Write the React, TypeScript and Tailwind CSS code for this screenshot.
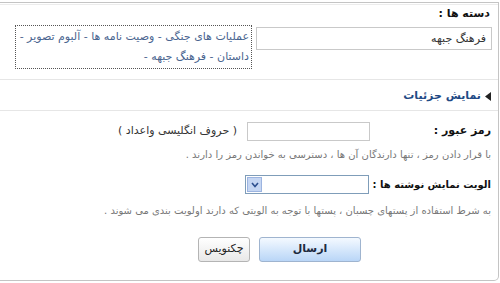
import React from "react";

const FONT = { fontFamily: '"DejaVu Sans", Tahoma, sans-serif' };

export default function App() {
  return (
    <div className="w-[500px] h-[283px] bg-white overflow-hidden" style={FONT}>
      <div
        dir="rtl"
        className="-ml-3 mr-[1px] mt-[2px] h-[279px] border-t border-r border-b border-[#c4c4c4] rounded-br-[5px] text-[11px] text-[#222]"
      >
        <div className="h-[2px] border-b border-[#ececec]" />

        {/* categories */}
        <div className="flex items-start pr-[6px] pt-[2px] pb-[10px] gap-[4px]">
          <div className="w-[236px] shrink-0">
            <div className="font-bold leading-[14px] pr-[2px] text-[#111]">دسته ها :</div>
            <div className="mt-[6px] h-[23px] border border-[#c9c9c9] px-[5px] leading-[21px] text-[#333]">
              فرهنگ جبهه
            </div>
          </div>
          <div className="mt-[18px] w-[237px] h-[44px] border border-dotted border-[#555] px-[2px] pt-[1px] leading-[20px] text-[#4a6590]">
            عملیات های جنگی - وصیت نامه ها - آلبوم تصویر - داستان - فرهنگ جبهه -
          </div>
        </div>

        <div className="h-px bg-[#e6e6e6]" />

        {/* details toggle */}
        <div className="flex items-center gap-[4px] pr-[7px] pt-[3px] h-[30px] text-[#1f4a85] font-bold">
          <svg width="6" height="9" viewBox="0 0 6 9" className="shrink-0">
            <path d="M6 0 L0 4.5 L6 9 Z" fill="#222" />
          </svg>
          <span>نمایش جزئیات</span>
        </div>

        <div className="h-px bg-[#e6e6e6]" />

        {/* password */}
        <div className="pr-[7px] pt-[11px]">
          <div className="flex items-center h-[19px]">
            <div className="w-[121px] shrink-0 whitespace-nowrap font-bold text-[#111]">رمز عبور :</div>
            <div className="w-[123px] h-[19px] shrink-0 border border-[#c9c9c9]" />
            <div className="mr-[10px] whitespace-nowrap text-[#333]">( حروف انگلیسی واعداد )</div>
          </div>
          <div className="mt-[7px] text-[10px] text-[#777] leading-[14px] whitespace-nowrap">
            با قرار دادن رمز ، تنها دارندگان آن ها ، دسترسی به خواندن رمز را دارند .
          </div>
        </div>

        {/* priority */}
        <div className="pr-[7px] pt-[13px]">
          <div className="flex items-center h-[19px]">
            <div className="w-[122px] shrink-0 whitespace-nowrap font-bold text-[10px] text-[#111]">
              الویت نمایش نوشته ها :
            </div>
            <div className="w-[124px] h-[19px] shrink-0 border border-[#7f9db9] flex justify-end bg-white">
              <div className="w-[15px] h-[15px] m-[1px] bg-[#c5d6f3] border border-[#9cb4e0] flex items-center justify-center">
                <svg width="8" height="6" viewBox="0 0 8 6">
                  <path d="M1 1 L4 4.5 L7 1" stroke="#2d4f8f" strokeWidth="1.6" fill="none" />
                </svg>
              </div>
            </div>
          </div>
          <div className="mt-[10px] text-[10px] text-[#777] leading-[14px] whitespace-nowrap">
            به شرط استفاده از پستهای چسبان ، پستها با توجه به الویتی که دارند اولویت بندی می شوند .
          </div>
        </div>

        {/* buttons */}
        <div className="flex justify-start gap-[9px] mt-[19px] pr-[137px]">
          <button className="w-[102px] h-[25px] rounded-[3px] border border-[#9fb4cf] bg-gradient-to-b from-[#f4f9ff] to-[#b9d6f7] font-bold text-[#1c2a3f] text-[11px]">
            ارسال
          </button>
          <button className="w-[52px] h-[25px] rounded-[3px] border border-[#b4b4b4] bg-gradient-to-b from-white to-[#e8e8e8] text-[#222] text-[11px]">
            چکنویس
          </button>
        </div>
      </div>
    </div>
  );
}
